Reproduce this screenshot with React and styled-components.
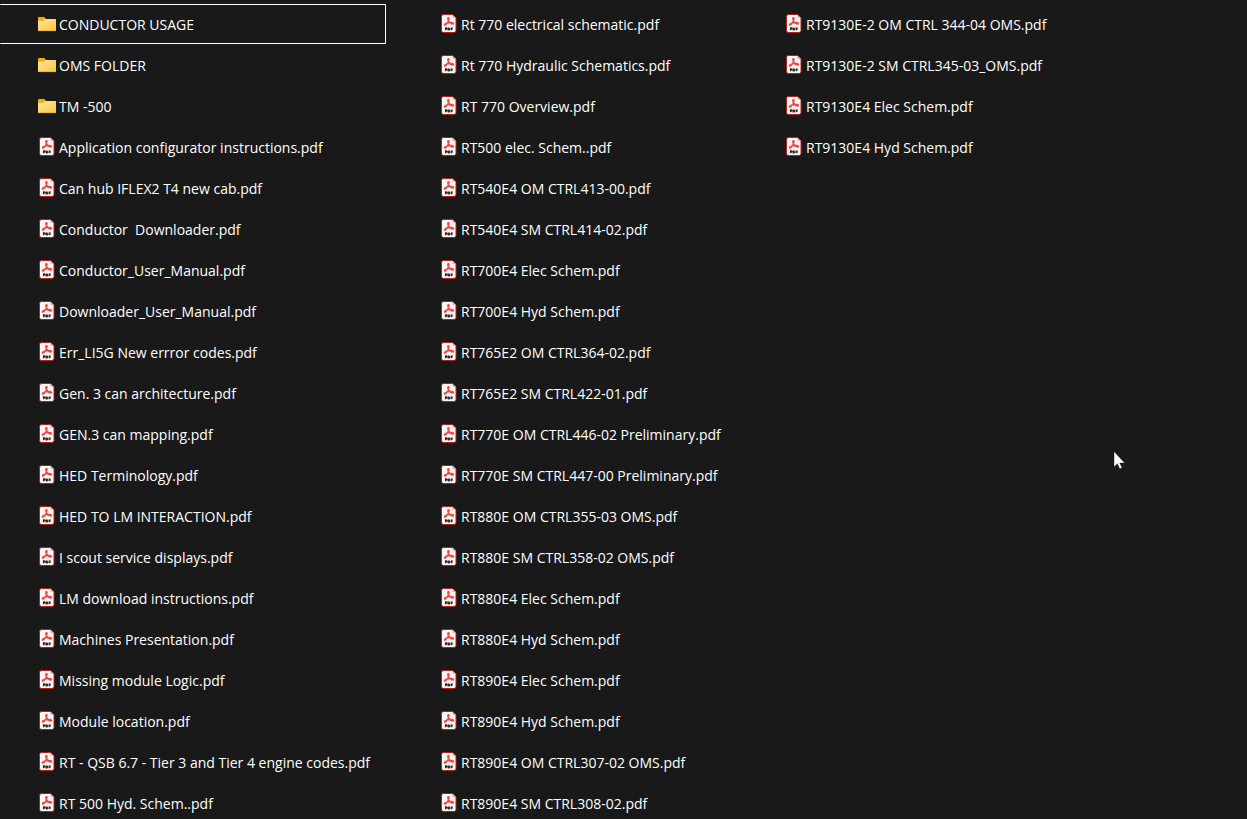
import React from "react";
import styled, { createGlobalStyle, css } from "styled-components";

const GlobalStyle = createGlobalStyle`
  html, body {
    margin: 0;
    background: #191919;
    overflow: hidden;
  }
`;

const FileView = styled.main`
  box-sizing: border-box;
  height: 100vh;
  padding-top: 4px;
  overflow: hidden;
  background: #191919;
  color: #fff;
  font-family: "Segoe UI", "Open Sans", "Noto Sans", sans-serif;
`;

const FileList = styled.ul`
  display: grid;
  grid-auto-flow: column;
  grid-template-rows: repeat(20, 40px);
  grid-template-columns: 386px 329px 1fr;
  gap: 1px 16px;
  margin: 0;
  padding: 0;
  list-style: none;
`;

const Item = styled.li`
  display: flex;
  min-width: 0;
`;

const ItemButton = styled.button`
  display: flex;
  align-items: center;
  gap: 4px;
  box-sizing: border-box;
  width: 100%;
  margin: 0;
  padding: 0 0 0 39px;
  border: 1px solid transparent;
  border-left: 0;
  border-radius: 1px;
  outline: none;
  background: none;
  color: inherit;
  font: inherit;
  font-size: 14px;
  line-height: 20px;
  text-align: left;
  white-space: pre;
  ${({ $focused }) =>
    $focused &&
    css`
      border-color: #fff;
    `}
`;

const FileName = styled.span`
  padding-top: 2px;
`;

const Glyph = styled.svg`
  flex: none;
  display: block;
  width: 16px;
  height: 20px;
  overflow: visible;
`;

const Pointer = styled.svg`
  position: absolute;
  left: 1113px;
  top: 451px;
  width: 12px;
  height: 19px;
  pointer-events: none;
`;

function FolderIcon() {
  return (
    <Glyph viewBox="0 0 16 20" aria-hidden="true">
      <defs>
        <linearGradient id="folderFront" x1="0" y1="0" x2="1" y2="1">
          <stop offset="0" stopColor="#ffe599" />
          <stop offset="1" stopColor="#fdc741" />
        </linearGradient>
      </defs>
      <path d="M-1 4q0-1 1-1h5.200l2 2h8.500q1.300 0 1.300 1.200V10H-1z" fill="#efac13" />
      <path d="M-1 7.500q0-.8.800-.8h4.500q.6 0 1-.4l.8-.8q.4-.4 1-.4h9q.9 0 .9.900v10.200q0 .9-.9.900H-.1q-.9 0-.9-.9z" fill="url(#folderFront)" />
      <path d="M-.7 16.700h17.400" stroke="#dfa02a" strokeWidth=".6" />
    </Glyph>
  );
}

function PdfIcon() {
  return (
    <Glyph viewBox="0 0 16 20" aria-hidden="true">
      <path
        d="M2.500.5h8.800l3.700 3.600v12.400q0 2-2 2H2.500q-2 0-2-2v-14q0-2 2-2z"
        fill="#faf5f4"
        stroke="#b5201b"
        strokeWidth="1"
      />
      <path d="M11.300.5v2.300q0 1.300 1.300 1.300H15z" fill="#e9b4b0" />
      <path
        d="M7.500 3.600c-1.300.1-.7 2.200.3 3.700 1.200 1.800 2.900 2.900 4.100 2.700 1.200-.3.600-1.400-1.300-1.500-2.200-.1-5.100.4-6.500 1.300-1.300.9-.6 1.700.5 1 1.500-1 2.900-3.800 3.300-5.400.3-1.100.2-1.800-.4-1.800z"
        fill="none"
        stroke="#ee4a43"
        strokeWidth="1.400"
        strokeLinejoin="round"
      />
      <path
        d="M4.500 16.200v-2.300h.7q.9 0 .9.700t-.9.700h-.7M7.200 13.900v2.100q1.500.1 1.500-1.050T7.200 13.900M10.200 16.200v-2.200h1.700M10.200 15.200h1.500"
        fill="none"
        stroke="#292323"
        strokeWidth="1.100"
      />
    </Glyph>
  );
}

const folders = ["CONDUCTOR USAGE", "OMS FOLDER", "TM -500"];

const documents = [
  "Application configurator instructions.pdf",
  "Can hub IFLEX2 T4 new cab.pdf",
  "Conductor  Downloader.pdf",
  "Conductor_User_Manual.pdf",
  "Downloader_User_Manual.pdf",
  "Err_LI5G New errror codes.pdf",
  "Gen. 3 can architecture.pdf",
  "GEN.3 can mapping.pdf",
  "HED Terminology.pdf",
  "HED TO LM INTERACTION.pdf",
  "I scout service displays.pdf",
  "LM download instructions.pdf",
  "Machines Presentation.pdf",
  "Missing module Logic.pdf",
  "Module location.pdf",
  "RT - QSB 6.7 - Tier 3 and Tier 4 engine codes.pdf",
  "RT 500 Hyd. Schem..pdf",
  "Rt 770 electrical schematic.pdf",
  "Rt 770 Hydraulic Schematics.pdf",
  "RT 770 Overview.pdf",
  "RT500 elec. Schem..pdf",
  "RT540E4 OM CTRL413-00.pdf",
  "RT540E4 SM CTRL414-02.pdf",
  "RT700E4 Elec Schem.pdf",
  "RT700E4 Hyd Schem.pdf",
  "RT765E2 OM CTRL364-02.pdf",
  "RT765E2 SM CTRL422-01.pdf",
  "RT770E OM CTRL446-02 Preliminary.pdf",
  "RT770E SM CTRL447-00 Preliminary.pdf",
  "RT880E OM CTRL355-03 OMS.pdf",
  "RT880E SM CTRL358-02 OMS.pdf",
  "RT880E4 Elec Schem.pdf",
  "RT880E4 Hyd Schem.pdf",
  "RT890E4 Elec Schem.pdf",
  "RT890E4 Hyd Schem.pdf",
  "RT890E4 OM CTRL307-02 OMS.pdf",
  "RT890E4 SM CTRL308-02.pdf",
  "RT9130E-2 OM CTRL 344-04 OMS.pdf",
  "RT9130E-2 SM CTRL345-03_OMS.pdf",
  "RT9130E4 Elec Schem.pdf",
  "RT9130E4 Hyd Schem.pdf",
];

export default function App() {
  return (
    <FileView>
      <GlobalStyle />
      <FileList>
        {folders.map((name, index) => (
          <Item key={name}>
            <ItemButton type="button" $focused={index === 0}>
              <FolderIcon />
              <FileName>{name}</FileName>
            </ItemButton>
          </Item>
        ))}
        {documents.map((name) => (
          <Item key={name}>
            <ItemButton type="button">
              <PdfIcon />
              <FileName>{name}</FileName>
            </ItemButton>
          </Item>
        ))}
      </FileList>
      <Pointer viewBox="0 0 12 19" aria-hidden="true">
        <path
          d="M1 .5v15.500l3.400-3.200 2.300 5 2.300-1-2.200-4.800h4.900z"
          fill="#fff"
          stroke="#0c0c0c"
          strokeWidth=".4"
        />
      </Pointer>
    </FileView>
  );
}
